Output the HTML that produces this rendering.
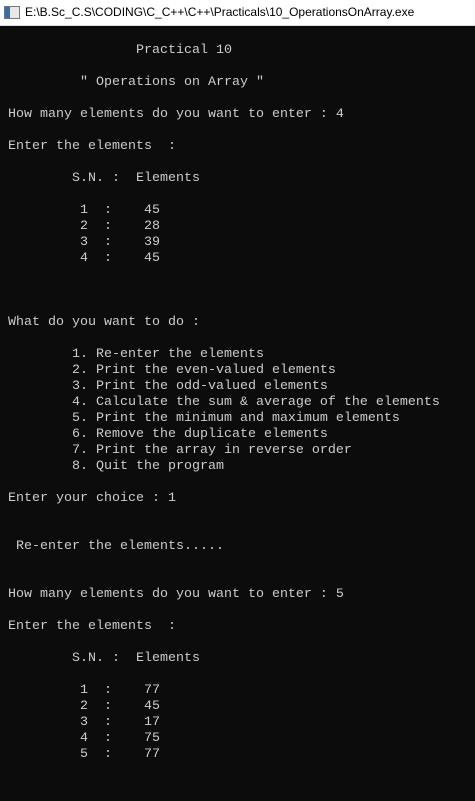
<!DOCTYPE html>
<html><head><meta charset="utf-8"><style>
html,body{margin:0;padding:0;width:475px;height:801px;overflow:hidden;background:#0c0c0c;}
.tb{position:absolute;left:0;top:0;width:475px;height:25px;background:#fff;border-bottom:1px solid #ddd;}
.tb .ic{position:absolute;left:4px;top:6px;width:14px;height:11px;border:1px solid #777;background:#e8e8e8;}
.tb .ic:before{content:"";position:absolute;left:0;top:0;width:5px;height:11px;background:#3a6ea5;}
.tb span{position:absolute;left:25px;top:5px;font:12px "Liberation Sans",sans-serif;color:#000;}
pre{position:absolute;left:8px;top:27px;margin:0;font-family:"Liberation Mono",monospace;font-size:13.33px;line-height:16px;color:#cccccc;}
</style></head><body>
<div class="tb"><div class="ic"></div><span>E:\B.Sc_C.S\CODING\C_C++\C++\Practicals\10_OperationsOnArray.exe</span></div>
<pre>

                Practical 10

         " Operations on Array "

How many elements do you want to enter : 4

Enter the elements  :

        S.N. :  Elements

         1  :    45
         2  :    28
         3  :    39
         4  :    45



What do you want to do :

        1. Re-enter the elements
        2. Print the even-valued elements
        3. Print the odd-valued elements
        4. Calculate the sum &amp; average of the elements
        5. Print the minimum and maximum elements
        6. Remove the duplicate elements
        7. Print the array in reverse order
        8. Quit the program

Enter your choice : 1


 Re-enter the elements.....


How many elements do you want to enter : 5

Enter the elements  :

        S.N. :  Elements

         1  :    77
         2  :    45
         3  :    17
         4  :    75
         5  :    77
</pre>
</body></html>
